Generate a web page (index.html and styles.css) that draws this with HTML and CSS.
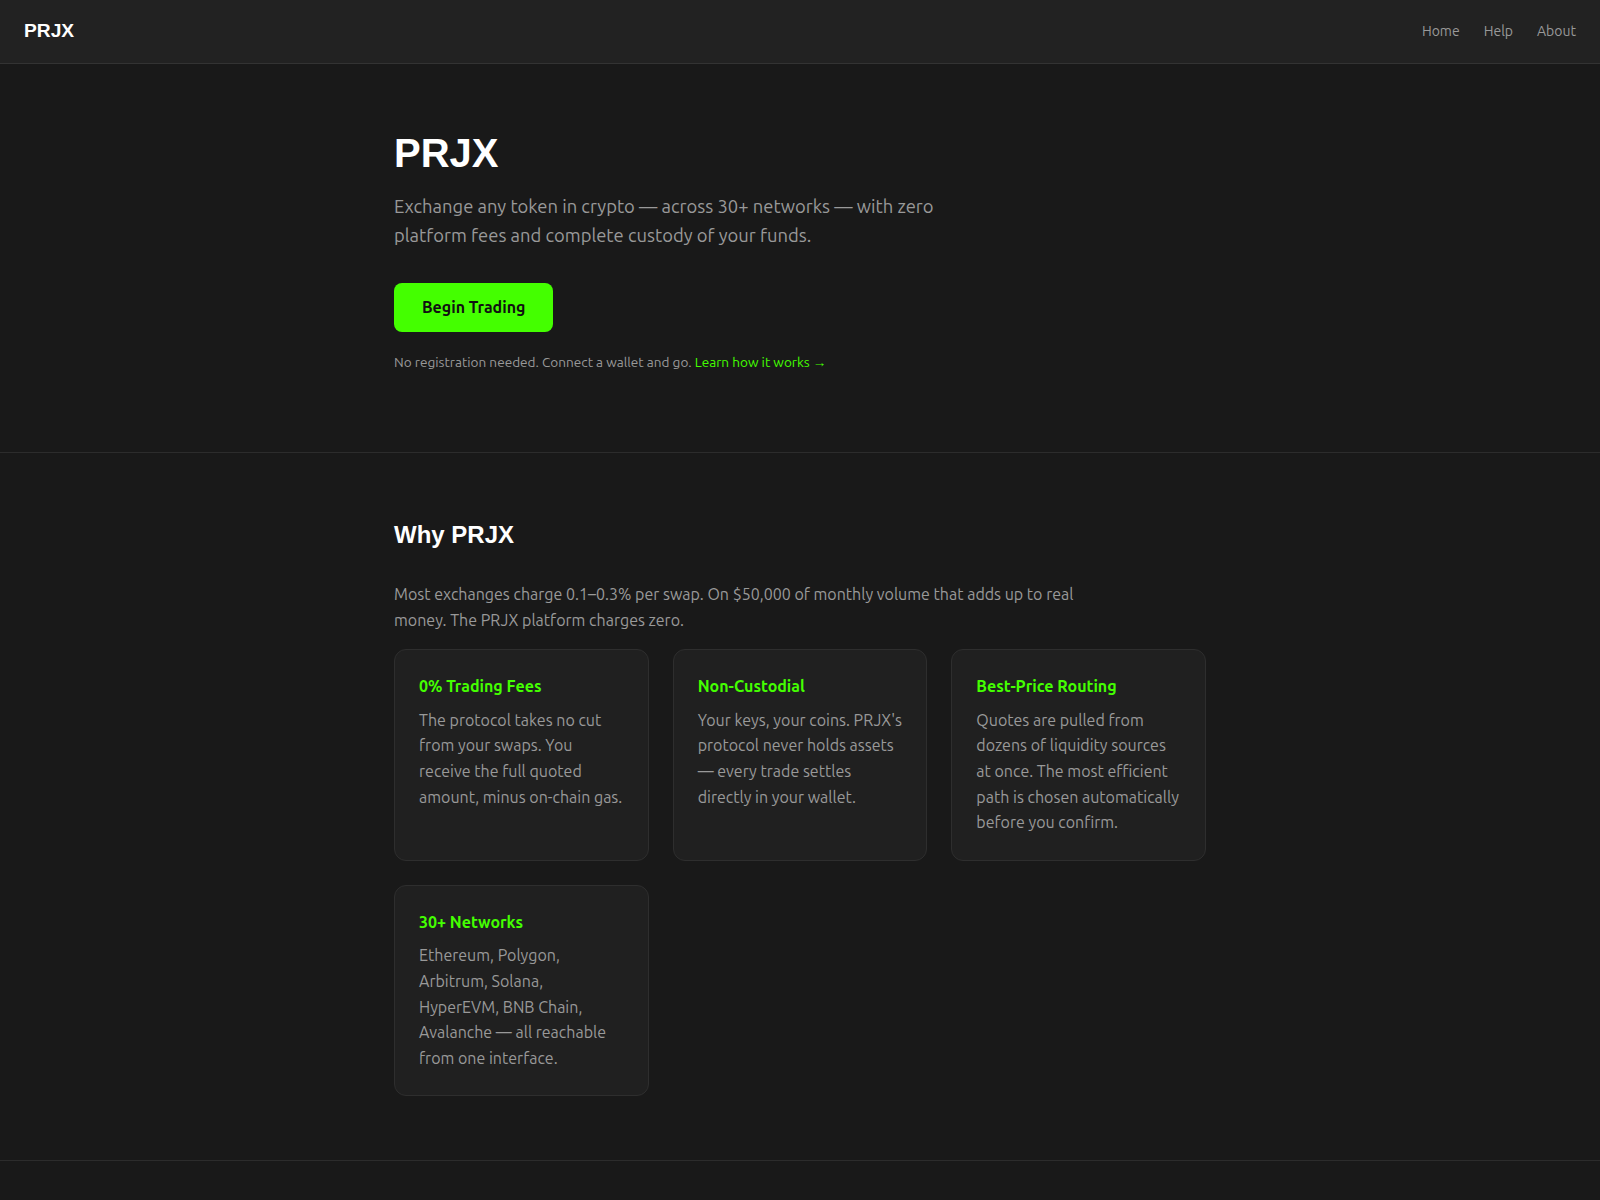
FILE: index.html
```html
<!DOCTYPE html>
<html lang="en">
<head>
<meta charset="UTF-8">
<meta name="viewport" content="width=device-width, initial-scale=1.0">
<title>PRJX</title>
<link rel="stylesheet" href="styles.css">
</head>
<body>

  <!-- top bar -->
  <header class="topbar">
    <a class="brand" href="#">PRJX</a>
    <nav class="nav">
      <a href="#">Home</a>
      <a href="#">Help</a>
      <a href="#">About</a>
    </nav>
  </header>

  <!-- hero -->
  <section class="hero">
    <div class="wrap">
      <h1>PRJX</h1>
      <p class="lead">Exchange any token in crypto — across 30+ networks — with zero platform fees and complete custody of your funds.</p>
      <a class="cta" href="#">Begin Trading</a>
      <p class="note">No registration needed. Connect a wallet and go. <a href="#">Learn how it works →</a></p>
    </div>
  </section>

  <!-- features -->
  <section class="why">
    <div class="wrap">
      <h2>Why PRJX</h2>
      <p class="intro">Most exchanges charge 0.1–0.3% per swap. On $50,000 of monthly volume that adds up to real money. The PRJX platform charges zero.</p>
      <div class="cards">
        <div class="card">
          <h3>0% Trading Fees</h3>
          <p>The protocol takes no cut from your swaps. You receive the full quoted amount, minus on-chain gas.</p>
        </div>
        <div class="card">
          <h3>Non-Custodial</h3>
          <p>Your keys, your coins. PRJX's protocol never holds assets — every trade settles directly in your wallet.</p>
        </div>
        <div class="card">
          <h3>Best-Price Routing</h3>
          <p>Quotes are pulled from dozens of liquidity sources at once. The most efficient path is chosen automatically before you confirm.</p>
        </div>
        <div class="card">
          <h3>30+ Networks</h3>
          <p>Ethereum, Polygon, Arbitrum, Solana, HyperEVM, BNB Chain, Avalanche — all reachable from one interface.</p>
        </div>
      </div>
    </div>
  </section>

</body>
</html>
```

FILE: styles.css
```css
* {
  box-sizing: border-box;
}

body {
  margin: 0;
  background: #191919;
  color: #999;
  font-family: Ubuntu, sans-serif;
  font-size: 16px;
  line-height: 1.6;
  min-height: 1200px;
}

a {
  text-decoration: none;
}

.topbar {
  height: 64px;
  background: #222;
  border-bottom: 1px solid #333;
  display: flex;
  align-items: center;
  justify-content: space-between;
  padding: 0 24px;
}

.brand {
  font-family: "Liberation Sans", Arial, sans-serif;
  font-weight: bold;
  font-size: 19.2px;
  color: #fff;
}

.nav {
  display: flex;
  gap: 24px;
}

.nav a {
  color: #999;
  font-size: 14px;
}

.wrap {
  max-width: 860px;
  margin: 0 auto;
  padding: 0 24px;
}

.hero {
  padding: 65px 0 78px;
  border-bottom: 1px solid #2c2c2c;
}

.hero h1 {
  font-family: "Liberation Sans", Arial, sans-serif;
  font-size: 40px;
  line-height: 1.2;
  color: #fff;
  margin: 0 0 15px;
}

.lead {
  font-size: 18.4px;
  max-width: 560px;
  margin: 0 0 32px;
}

.cta {
  display: inline-block;
  background: #44ff00;
  color: #111;
  font-weight: bold;
  font-size: 16px;
  padding: 12px 28px;
  border-radius: 8px;
}

.note {
  font-size: 13.6px;
  margin: 20px 0 0;
}

.note a {
  color: #44ff00;
}

.why {
  padding: 68px 0 64px;
  border-bottom: 1px solid #2c2c2c;
}

.why h2 {
  font-family: "Liberation Sans", Arial, sans-serif;
  font-size: 24px;
  line-height: 1.2;
  color: #fff;
  margin: 0 0 32px;
}

.intro {
  max-width: 700px;
  margin: 0 0 16px;
}

.cards {
  display: grid;
  grid-template-columns: repeat(auto-fill, minmax(240px, 1fr));
  gap: 24px;
}

.card {
  background: #202020;
  border: 1px solid #2e2e2e;
  border-radius: 12px;
  padding: 24px;
}

.card h3 {
  color: #44ff00;
  font-size: 16px;
  margin: 0 0 8px;
}

.card p {
  margin: 0;
}
```
